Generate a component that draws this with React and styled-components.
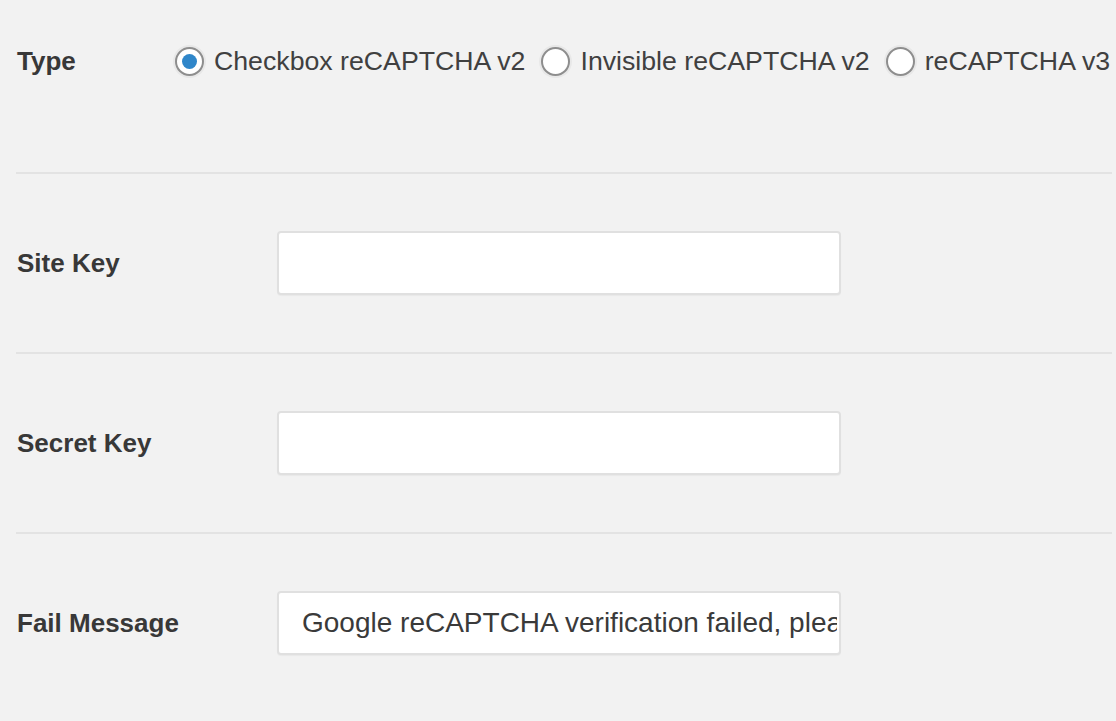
import React from "react";
import styled, { createGlobalStyle } from "styled-components";

const Global = createGlobalStyle`
  html, body { margin: 0; padding: 0; background: #f2f2f2; }
  body { font-family: "Liberation Sans", Arial, sans-serif; color: #3c3c3c; }
  * { box-sizing: border-box; }
`;

const Page = styled.div`
  width: 1116px;
  height: 721px;
  overflow: hidden;
  padding: 0 4px 0 16px;
`;

const TypeRow = styled.div`
  display: flex;
  align-items: center;
  height: 172px;
  padding-bottom: 50px;
  padding-left: 1px;
`;

const Row = styled.div`
  display: flex;
  align-items: center;
  height: 180px;
  border-top: 2px solid #e3e3e3;
  padding-left: 1px;
`;

const Label = styled.div`
  width: ${(p) => p.$w || 260}px;
  flex: none;
  font-size: 26px;
  font-weight: 700;
  color: #383838;
`;

const RadioGroup = styled.div`
  display: flex;
  align-items: center;
  gap: 16px;
`;

const RadioOption = styled.label`
  display: flex;
  align-items: center;
  gap: 10px;
  font-size: 26.7px;
  color: #404040;
  white-space: nowrap;
`;

const Circle = styled.span`
  width: 29px;
  height: 29px;
  border-radius: 50%;
  border: 2px solid #8e8e8e;
  background: #fff;
  box-shadow: 0 0 0 2px #e8e8e8;
  display: flex;
  align-items: center;
  justify-content: center;
  flex: none;
  &::after {
    content: "";
    display: ${(p) => (p.$checked ? "block" : "none")};
    width: 15px;
    height: 15px;
    border-radius: 50%;
    background: #2f86c9;
  }
`;

const Input = styled.input`
  width: 564px;
  height: 64px;
  border: 2px solid #e0e0e0;
  border-radius: 4px;
  background: #fff;
  font-family: "Liberation Sans", Arial, sans-serif;
  font-size: 28px;
  color: #3a3a3a;
  padding: 0 2px 0 23px;
  outline: none;
  box-shadow: 0 1px 1px rgba(0,0,0,0.04);
`;

const Radio = ({ checked, children }) => (
  <RadioOption>
    <Circle $checked={checked} />
    {children}
  </RadioOption>
);

export default function App() {
  return (
    <>
      <Global />
      <Page>
        <TypeRow>
          <Label $w={158}>Type</Label>
          <RadioGroup>
            <Radio checked>Checkbox reCAPTCHA v2</Radio>
            <Radio>Invisible reCAPTCHA v2</Radio>
            <Radio>reCAPTCHA v3</Radio>
          </RadioGroup>
        </TypeRow>
        <Row>
          <Label>Site Key</Label>
          <Input defaultValue="" />
        </Row>
        <Row>
          <Label>Secret Key</Label>
          <Input defaultValue="" />
        </Row>
        <Row>
          <Label>Fail Message</Label>
          <Input defaultValue="Google reCAPTCHA verification failed, please try again later." />
        </Row>
      </Page>
    </>
  );
}
